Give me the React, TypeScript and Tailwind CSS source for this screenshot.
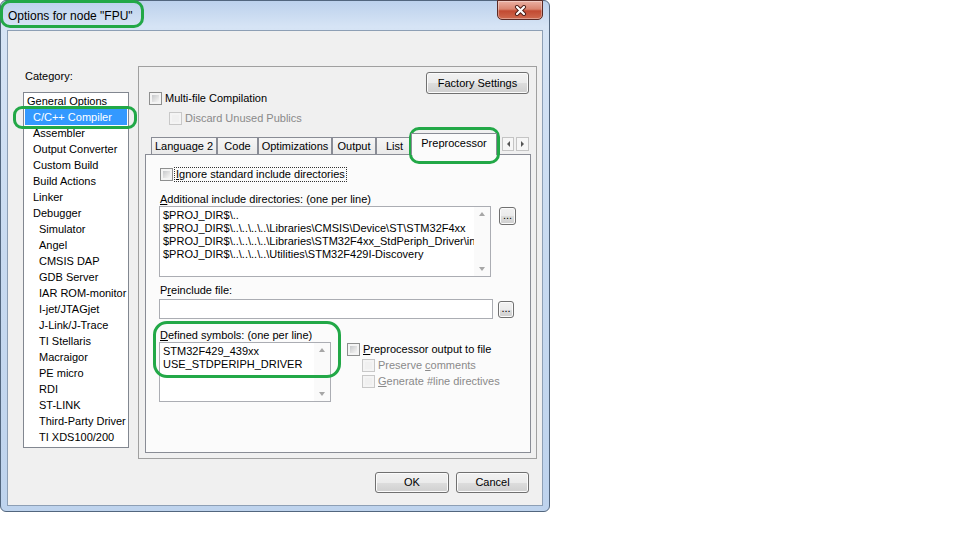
import React from 'react';

// Tree of option categories: [label, indent level, selected]
const categories: [string, number, boolean?][] = [
  ['General Options', 0],
  ['C/C++ Compiler', 1, true],
  ['Assembler', 1],
  ['Output Converter', 1],
  ['Custom Build', 1],
  ['Build Actions', 1],
  ['Linker', 1],
  ['Debugger', 1],
  ['Simulator', 2],
  ['Angel', 2],
  ['CMSIS DAP', 2],
  ['GDB Server', 2],
  ['IAR ROM-monitor', 2],
  ['I-jet/JTAGjet', 2],
  ['J-Link/J-Trace', 2],
  ['TI Stellaris', 2],
  ['Macraigor', 2],
  ['PE micro', 2],
  ['RDI', 2],
  ['ST-LINK', 2],
  ['Third-Party Driver', 2],
  ['TI XDS100/200', 2],
];

const tabs: { label: string; w: string }[] = [
  { label: 'Language 2', w: 'w-[66px]' },
  { label: 'Code', w: 'w-[41px]' },
  { label: 'Optimizations', w: 'w-[74px]' },
  { label: 'Output', w: 'w-[44px]' },
  { label: 'List', w: 'w-[37px]' },
];

const includeDirs = [
  '$PROJ_DIR$\\..',
  '$PROJ_DIR$\\..\\..\\..\\..\\Libraries\\CMSIS\\Device\\ST\\STM32F4xx',
  '$PROJ_DIR$\\..\\..\\..\\..\\Libraries\\STM32F4xx_StdPeriph_Driver\\inc',
  '$PROJ_DIR$\\..\\..\\..\\..\\Utilities\\STM32F429I-Discovery',
];

const Checkbox = ({ disabled }: { disabled?: boolean }) => (
  <span
    className={`flex w-[13px] h-[13px] shrink-0 p-[2px] border ${
      disabled ? 'border-[#c8c8c8] bg-[#f4f4f4]' : 'border-[#8e8f8f] bg-[#f4f4f4]'
    }`}
  >
    <span
      className={`flex-1 ${
        disabled
          ? 'bg-[#f0f0f0]'
          : 'bg-[linear-gradient(135deg,#c6c8cb_0%,#e4e4e4_60%,#f6f6f6_100%)]'
      }`}
    />
  </span>
);

const Button = ({ children, className = '' }: { children: React.ReactNode; className?: string }) => (
  <div
    className={`flex items-center justify-center border border-[#707070] rounded-[3px] bg-[linear-gradient(#f2f2f2_0%,#ebebeb_50%,#dddddd_51%,#cfcfcf_100%)] shadow-[inset_0_0_0_1px_#fbfbfb] ${className}`}
  >
    {children}
  </div>
);

const Scrollbar = () => (
  <div className="w-[16px] shrink-0 flex flex-col items-center justify-between py-[5px] bg-[#fafafa]">
    <span className="w-0 h-0 border-x-[3.5px] border-x-transparent border-b-[4px] border-b-[#a6a6a6]" />
    <span className="w-0 h-0 border-x-[3.5px] border-x-transparent border-t-[4px] border-t-[#a6a6a6]" />
  </div>
);

const Mark = ({ className }: { className: string }) => (
  <div className={`absolute border-[3px] border-[#22a847] ${className}`} />
);

export default function App() {
  return (
    <div className="relative w-[960px] h-[540px] bg-white overflow-hidden font-['Liberation_Sans',Arial,sans-serif] text-[11px] text-black">
      {/* dialog window */}
      <div className="w-[550px] h-[512px] flex flex-col rounded-[6px] border border-[#52667e] bg-[linear-gradient(180deg,#bcd1ec_0%,#d6e4f5_5%,#c8daf0_50%,#bed3ed_100%)]">
        <div className="h-[29px] shrink-0 flex items-start justify-between">
          <span className="pl-[7px] pt-[8px] text-[12px] leading-[14px]">{'Options for node "FPU"'}</span>
          <div className="mr-[6px] mt-[-1px] w-[46px] h-[20px] rounded-b-[5px] border border-[#5b2a24] bg-[linear-gradient(180deg,#eab0a3_0%,#d98570_45%,#c24a32_55%,#cf6a4f_100%)] shadow-[inset_0_0_0_1px_rgba(255,255,255,0.35)] flex items-center justify-center">
            <svg width="13" height="11" viewBox="0 0 13 11">
              <path d="M3 2 L10 9 M10 2 L3 9" stroke="#4a1c16" strokeWidth="4" strokeLinecap="round" />
              <path d="M3 2 L10 9 M10 2 L3 9" stroke="#ffffff" strokeWidth="2.2" strokeLinecap="round" />
            </svg>
          </div>
        </div>

        {/* client area */}
        <div className="flex-1 mx-[6px] mb-[5px] border border-[#8d9fb5] bg-[#f0f0f0] flex flex-col">
          <div className="flex pt-[35px] pl-[15px]">
            {/* category tree */}
            <div className="w-[106px] shrink-0">
              <div className="mt-[3px] pl-[2px] leading-[14px]">Category:</div>
              <div className="mt-[9px] h-[356px] border border-[#828790] bg-white pr-[1px]">
                {categories.map(([label, level, selected]) => (
                  <div
                    key={label}
                    className={`h-[16px] leading-[16px] whitespace-nowrap ${
                      level === 0 ? 'pl-[3px]' : level === 1 ? 'pl-[9px]' : 'pl-[15px]'
                    }`}
                  >
                    {selected ? (
                      <div className="-ml-[8px] pl-[8px] bg-[#3399ff] text-white">{label}</div>
                    ) : (
                      label
                    )}
                  </div>
                ))}
              </div>
            </div>

            {/* options page */}
            <div className="ml-[9px] w-[399px] h-[393px] border border-[#a0a0a0] flex flex-col">
              <div className="flex justify-end pt-[5px] pr-[7px]">
                <Button className="w-[103px] h-[22px]">Factory Settings</Button>
              </div>
              <div className="mt-[-3px] h-[15px] flex items-center gap-[3px] pl-[10px]">
                <Checkbox />
                <span>Multi-file Compilation</span>
              </div>
              <div className="mt-[5px] h-[15px] flex items-center gap-[3px] pl-[30px] text-[#8a8a8a]">
                <Checkbox disabled />
                <span>Discard Unused Publics</span>
              </div>

              {/* tab control */}
              <div className="mt-[11px] ml-[6px] w-[386px]">
                <div className="h-[17px] flex items-end pl-[6px] relative">
                  {tabs.map((t) => (
                    <div
                      key={t.label}
                      className={`${t.w} h-[17px] shrink-0 border border-b-0 border-[#898c95] bg-[linear-gradient(#f6f6f6,#e9e9e9)] flex items-center justify-center leading-none`}
                    >
                      {t.label}
                    </div>
                  ))}
                  <div className="-ml-[2px] w-[86px] h-[22px] mb-[-1px] shrink-0 border border-b-0 border-[#898c95] bg-[#fbfbfb] flex justify-center pt-[4px] leading-none relative z-10">
                    Preprocessor
                  </div>
                  <div className="ml-auto mr-[2px] self-start flex gap-[2px]">
                    <div className="w-[12px] h-[14px] border border-[#c4c4c4] bg-[#f6f6f6] flex items-center justify-center">
                      <span className="w-0 h-0 border-y-[3px] border-y-transparent border-r-[3px] border-r-[#555]" />
                    </div>
                    <div className="w-[13px] h-[14px] border border-[#c4c4c4] bg-[#f6f6f6] flex items-center justify-center">
                      <span className="w-0 h-0 border-y-[3px] border-y-transparent border-l-[3px] border-l-[#555]" />
                    </div>
                  </div>
                </div>

                <div className="h-[299px] border border-[#898c95] bg-[#fbfbfb] flex flex-col">
                  <div className="mt-[12px] h-[15px] flex items-center gap-[1px] pl-[14px]">
                    <Checkbox />
                    <span className="border border-dotted border-[#333] px-[1px] leading-[13px]">
                      <u className="underline-offset-[1px]">I</u>gnore standard include directories
                    </span>
                  </div>
                  <div className="mt-[11px] h-[13px] leading-[13px] pl-[14px]">
                    <u className="underline-offset-[1px]">A</u>dditional include directories: (one per line)
                  </div>
                  <div className="flex items-start pl-[13px]">
                    <div className="w-[332px] h-[71px] border border-[#abadb3] bg-white flex">
                      <div className="flex-1 overflow-hidden pl-[3px] pt-[2px] leading-[13px]">
                        {includeDirs.map((d) => (
                          <div key={d} className="whitespace-nowrap">{d}</div>
                        ))}
                      </div>
                      <Scrollbar />
                    </div>
                    <Button className="ml-[8px] mt-[1px] w-[17px] h-[18px] items-end pb-[3px] leading-none">...</Button>
                  </div>

                  <div className="mt-[7px] h-[13px] leading-[13px] pl-[14px]">
                    P<u className="underline-offset-[1px]">r</u>einclude file:
                  </div>
                  <div className="mt-[2px] flex items-start pl-[13px]">
                    <div className="w-[334px] h-[20px] border border-[#abadb3] bg-white" />
                    <Button className="ml-[5px] mt-[2px] w-[16px] h-[17px] items-end pb-[3px] leading-none">...</Button>
                  </div>

                  <div className="mt-[10px] h-[13px] leading-[13px] pl-[14px]">
                    <u className="underline-offset-[1px]">D</u>efined symbols: (one per line)
                  </div>
                  <div className="flex items-start pl-[13px]">
                    <div className="w-[172px] h-[60px] border border-[#abadb3] bg-white flex">
                      <div className="flex-1 pl-[3px] pt-[2px] leading-[13px] whitespace-nowrap">
                        <div>STM32F429_439xx</div>
                        <div>USE_STDPERIPH_DRIVER</div>
                      </div>
                      <Scrollbar />
                    </div>
                    <div className="ml-[16px] flex flex-col">
                      <div className="h-[15px] flex items-center gap-[3px]">
                        <Checkbox />
                        <span>
                          <u className="underline-offset-[1px]">P</u>reprocessor output to file
                        </span>
                      </div>
                      <div className="mt-[1px] h-[15px] flex items-center gap-[3px] pl-[15px] text-[#8a8a8a]">
                        <Checkbox disabled />
                        <span>
                          Preserve <u className="underline-offset-[1px]">c</u>omments
                        </span>
                      </div>
                      <div className="mt-[1px] h-[15px] flex items-center gap-[3px] pl-[15px] text-[#8a8a8a]">
                        <Checkbox disabled />
                        <span>
                          <u className="underline-offset-[1px]">G</u>enerate #line directives
                        </span>
                      </div>
                    </div>
                  </div>
                </div>
              </div>
            </div>
          </div>

          <div className="mt-[13px] flex justify-end gap-[7px] pr-[13px]">
            <Button className="w-[74px] h-[21px]">OK</Button>
            <Button className="w-[73px] h-[21px]">Cancel</Button>
          </div>
        </div>
      </div>

      {/* green highlight rings */}
      <Mark className="left-[0px] top-[0px] w-[144px] h-[28px] rounded-[10px]" />
      <Mark className="left-[13px] top-[106px] w-[124px] h-[23px] rounded-[9px]" />
      <Mark className="left-[409px] top-[127px] w-[91px] h-[37px] rounded-[10px]" />
      <Mark className="left-[153px] top-[321px] w-[188px] h-[57px] rounded-[14px]" />
    </div>
  );
}
